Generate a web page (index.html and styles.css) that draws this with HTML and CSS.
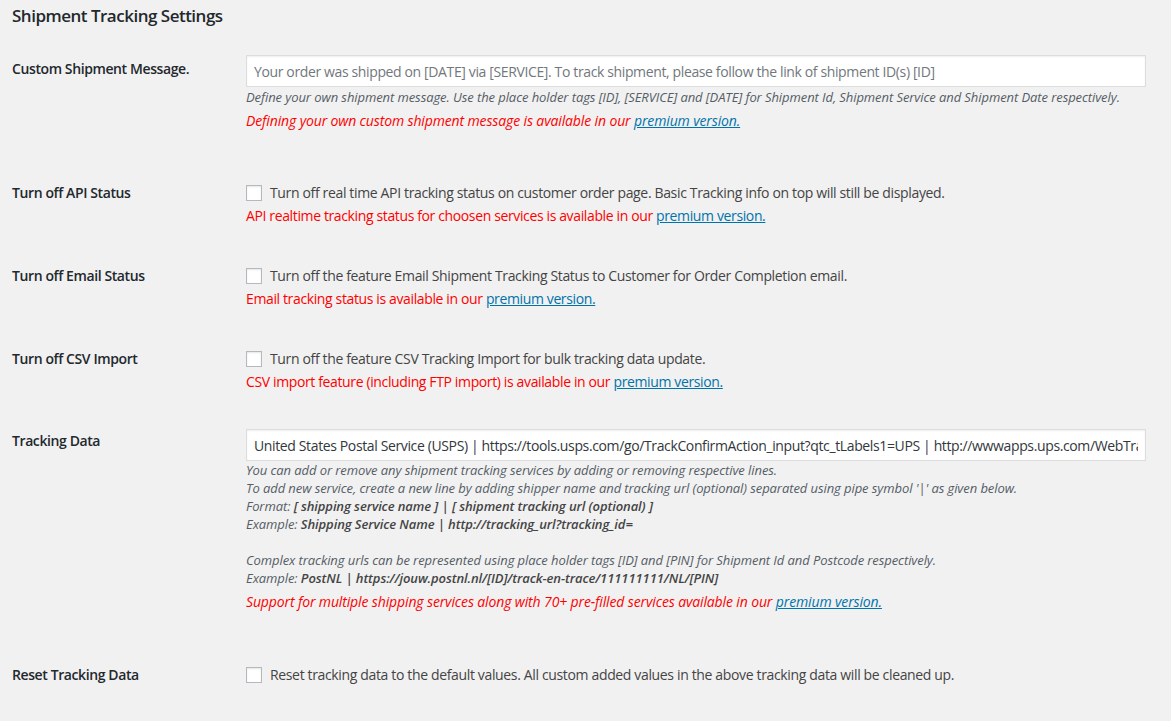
FILE: index.html
```html
<!DOCTYPE html>
<html>
<head>
<meta charset="utf-8">
<link rel="stylesheet" href="styles.css">
</head>
<body>
<div class="wrap">
  <h2 class="title">Shipment Tracking Settings</h2>
  <div class="form-table">
    <div class="row row-input row-first">
      <div class="th">Custom Shipment Message.</div>
      <div class="td">
        <input class="text" type="text" placeholder="Your order was shipped on [DATE] via [SERVICE]. To track shipment, please follow the link of shipment ID(s) [ID]">
        <p class="description desc-first">Define your own shipment message. Use the place holder tags [ID], [SERVICE] and [DATE] for Shipment Id, Shipment Service and Shipment Date respectively.</p>
        <p class="premium premium-italic">Defining your own custom shipment message is available in our <a href="#">premium version.</a></p>
      </div>
    </div>
    <div class="row row-check">
      <div class="th">Turn off API Status</div>
      <div class="td">
        <label class="check"><span class="box"></span>Turn off real time API tracking status on customer order page. Basic Tracking info on top will still be displayed.</label>
        <p class="premium">API realtime tracking status for choosen services is available in our <a href="#">premium version.</a></p>
      </div>
    </div>
    <div class="row row-check">
      <div class="th">Turn off Email Status</div>
      <div class="td">
        <label class="check"><span class="box"></span>Turn off the feature Email Shipment Tracking Status to Customer for Order Completion email.</label>
        <p class="premium">Email tracking status is available in our <a href="#">premium version.</a></p>
      </div>
    </div>
    <div class="row row-check">
      <div class="th">Turn off CSV Import</div>
      <div class="td">
        <label class="check"><span class="box"></span>Turn off the feature CSV Tracking Import for bulk tracking data update.</label>
        <p class="premium">CSV import feature (including FTP import) is available in our <a href="#">premium version.</a></p>
      </div>
    </div>
    <div class="row row-input row-data">
      <div class="th">Tracking Data</div>
      <div class="td">
        <input class="text text-value" type="text" value="United States Postal Service (USPS) | https://tools.usps.com/go/TrackConfirmAction_input?qtc_tLabels1=UPS | http://wwwapps.ups.com/WebTracking/track?track=yes&amp;trackNums=">
        <div class="description">
          <div>You can add or remove any shipment tracking services by adding or removing respective lines.</div>
          <div>To add new service, create a new line by adding shipper name and tracking url (optional) separated using pipe symbol '|' as given below.</div>
          <div>Format: <b>[ shipping service name ] | [ shipment tracking url (optional) ]</b></div>
          <div>Example: <b>Shipping Service Name | http://tracking_url?tracking_id=</b></div>
          <div class="blank"></div>
          <div>Complex tracking urls can be represented using place holder tags [ID] and [PIN] for Shipment Id and Postcode respectively.</div>
          <div>Example: <b>PostNL | https://jouw.postnl.nl/[ID]/track-en-trace/111111111/NL/[PIN]</b></div>
        </div>
        <p class="premium premium-italic">Support for multiple shipping services along with 70+ pre-filled services available in our <a href="#">premium version.</a></p>
      </div>
    </div>
    <div class="row row-check row-last">
      <div class="th">Reset Tracking Data</div>
      <div class="td">
        <label class="check"><span class="box"></span>Reset tracking data to the default values. All custom added values in the above tracking data will be cleaned up.</label>
      </div>
    </div>
  </div>
</div>
</body>
</html>
```

FILE: styles.css
```css
html, body {
  margin: 0;
  padding: 0;
  background: #f1f1f1;
}
body {
  font-family: "Open Sans", "Noto Sans", sans-serif;
  font-size: 14px;
  color: #444;
  letter-spacing: -0.35px;
}
.wrap {
  padding: 0 25px 0 12px;
}
.title {
  margin: 4px 0 0 0;
  font-size: 17px;
  line-height: 23px;
  font-weight: 600;
  color: #23282d;
  letter-spacing: -0.5px;
}
.form-table {
  margin-top: 13px;
}
.row {
  display: flex;
}
.th {
  width: 234px;
  flex: none;
  font-weight: 600;
  color: #23282d;
  font-size: 14px;
  line-height: 18px;
  letter-spacing: -0.4px;
}
.td {
  flex: 1;
  min-width: 0;
  padding-bottom: 15px;
}
.row-input .th {
  padding-top: 20px;
}
.row-input .td {
  padding-top: 15px;
}
.row-check .th {
  padding-top: 17px;
}
.row-check .td {
  padding-top: 16px;
}
.row-check + .row-check {
  margin-top: -1px;
}
.row-data {
  margin-top: -3px;
}
.row-data .th {
  padding-top: 18px;
}
.row-last {
  margin-top: 1px;
}
.text {
  display: block;
  box-sizing: border-box;
  width: 900px;
  height: 32px;
  margin: 0;
  padding: 0 7px;
  border: 1px solid #ddd;
  background: #fff;
  box-shadow: inset 0 1px 2px rgba(0,0,0,0.07);
  font-family: inherit;
  font-size: 14px;
  letter-spacing: -0.37px;
  color: #32373c;
  outline: none;
}
.text::placeholder {
  color: #72777c;
  opacity: 1;
}
.description {
  margin: 0;
  font-size: 13px;
  line-height: 18px;
  font-style: italic;
  color: #555d66;
  letter-spacing: -0.08px;
}
.description b {
  font-weight: 600;
  color: #444;
}
.desc-first {
  margin-top: 1px;
}
.blank {
  height: 18px;
}
.premium {
  margin: 6px 0 11px 0;
  color: #ff0000;
  font-size: 14px;
  line-height: 18px;
  letter-spacing: -0.37px;
}
.row-check .premium {
  margin-top: 4px;
}
.premium-italic {
  font-style: italic;
  margin-bottom: 22px;
  letter-spacing: -0.13px;
}
.premium a {
  color: #0073aa;
  text-decoration: underline;
}
.check {
  display: flex;
  align-items: center;
  line-height: 20px;
  color: #444;
}
.box {
  display: inline-block;
  width: 16px;
  height: 16px;
  box-sizing: border-box;
  border: 1px solid #b4b9be;
  background: #fff;
  box-shadow: inset 0 1px 2px rgba(0,0,0,0.1);
  margin-right: 8px;
  flex: none;
}
```
